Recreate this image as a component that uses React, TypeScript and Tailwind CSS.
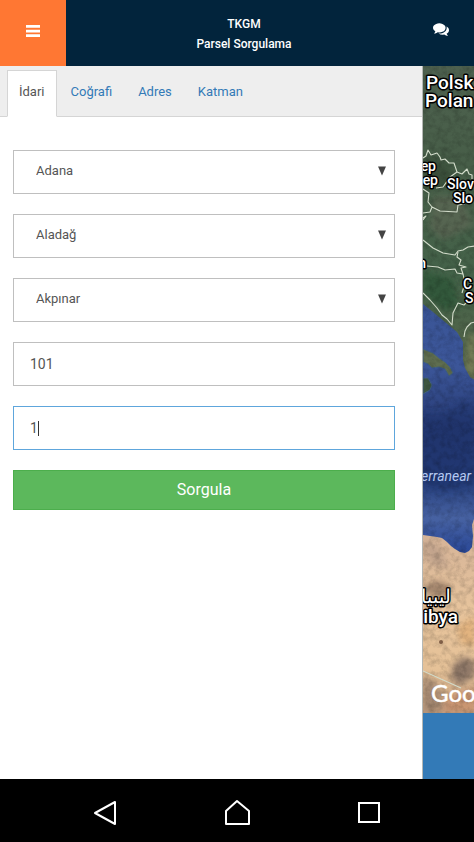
import { useState } from "react";

const TABS = ["İdari", "Coğrafi", "Adres", "Katman"];

const FIELD =
  "block h-11 w-full appearance-none rounded-none border bg-white text-[#555555] outline-none";

interface SelectFieldProps {
  label: string;
  options: string[];
}

function SelectField({ label, options }: SelectFieldProps) {
  return (
    <div className="relative">
      <select
        aria-label={label}
        className={`${FIELD} border-[#bfbfbf] pr-8 pb-0.5 pl-[22px] text-[13px]`}
      >
        {options.map((option) => (
          <option key={option}>{option}</option>
        ))}
      </select>
      <svg
        viewBox="0 0 10 10"
        className="pointer-events-none absolute top-4 right-2 size-[10px] fill-[#444444]"
        aria-hidden="true"
      >
        <path d="M1 0.5h8L5 9.5z" />
      </svg>
    </div>
  );
}

function Header() {
  return (
    <header className="flex h-[66px] shrink-0 items-stretch bg-[#02243c] text-white">
      <button
        type="button"
        aria-label="Menü"
        className="flex w-[66px] items-center justify-center bg-[#ff7733] pb-1"
      >
        <svg viewBox="0 0 14 12" className="h-3 w-[14px] fill-white" aria-hidden="true">
          <path d="M0 0h14v2.700H0zM0 4.700h14v2.700H0zM0 9.300h14v2.700H0z" />
        </svg>
      </button>
      <h1 className="flex-1 pt-[14px] text-center text-xs leading-5 font-medium">
        TKGM
        <br />
        Parsel Sorgulama
      </h1>
      <button
        type="button"
        aria-label="Mesajlar"
        className="flex w-[52px] items-center justify-center pr-[14px] pb-2"
      >
        <svg viewBox="0 0 1792 1792" className="size-4 fill-white" aria-hidden="true">
          <path d="M1408 768q0 139-94 257t-256.500 186.500-353.500 68.500q-86 0-176-16-124 88-278 128-36 9-86 16h-3q-11 0-20.500-8t-11.500-21q-1-3-1-6.500t.5-6.500 2-6l2.500-5t3.500-5.500 4-5 4.500-5 4-4.500q5-6 23-25t26-29.500 22.500-29 25-38.500 20.500-44q-124-72-195-177t-71-224q0-139 94-257t256.500-186.500 353.500-68.500 353.500 68.500 256.500 186.500 94 257zm384 256q0 120-71 224.500t-195 176.500q10 24 20.500 44t25 38.500 22.500 29 26 29.500 23 25q1 1 4 4.500t4.500 5 4 5 3.500 5.500l2.500 5t2 6 .5 6.500-1 6.500q-3 14-13 22t-22 7q-50-7-86-16-154-40-278-128-90 16-176 16-271 0-472-132 58 4 88 4 161 0 309-45t264-129q125-92 192-212t67-254q0-77-23-152 129 71 204 178t75 230z" />
        </svg>
      </button>
    </header>
  );
}

function MapStrip() {
  return (
    <svg
      viewBox="0 0 52 647"
      preserveAspectRatio="xMinYMin slice"
      className="min-h-0 w-full flex-1"
      role="img"
      aria-label="Harita"
    >
      <defs>
        <linearGradient id="land" x1="0" y1="0" x2="0" y2="320" gradientUnits="userSpaceOnUse">
          <stop offset="0" stopColor="#4e614f" />
          <stop offset="0.3" stopColor="#475e48" />
          <stop offset="0.65" stopColor="#446249" />
          <stop offset="1" stopColor="#59674b" />
        </linearGradient>
        <linearGradient id="sea" x1="0" y1="238" x2="0" y2="487" gradientUnits="userSpaceOnUse">
          <stop offset="0" stopColor="#3a5596" />
          <stop offset="0.25" stopColor="#3c5699" />
          <stop offset="0.5" stopColor="#263a74" />
          <stop offset="0.72" stopColor="#28417f" />
          <stop offset="0.86" stopColor="#4762a2" />
          <stop offset="1" stopColor="#2a4898" />
        </linearGradient>
        <linearGradient id="sand" x1="0" y1="468" x2="0" y2="647" gradientUnits="userSpaceOnUse">
          <stop offset="0" stopColor="#d6b498" />
          <stop offset="0.4" stopColor="#e6c39c" />
          <stop offset="0.75" stopColor="#e6c298" />
          <stop offset="1" stopColor="#c39f80" />
        </linearGradient>
        <filter id="grain" x="0" y="0" width="100%" height="100%">
          <feTurbulence type="fractalNoise" baseFrequency="0.16" numOctaves="4" seed="7" />
          <feColorMatrix values="0 0 0 0 0  0 0 0 0 0  0 0 0 0 0  1.6 0 0 0 -0.62" />
        </filter>
        <filter id="soft" x="-50%" y="-50%" width="200%" height="200%">
          <feGaussianBlur stdDeviation="3" />
        </filter>
      </defs>

      <rect width="52" height="330" fill="url(#land)" />
      <g filter="url(#soft)">
        <path d="M0 88l20 6 10 10-8 16-22 4z" fill="#3a503a" />
        <path d="M10 130l30 0 10 30-30 14-14-12z" fill="#566551" />
        <path d="M0 205l30 8 6 28-14 4-22-18z" fill="#33593b" />
        <path d="M46 270l6-4v46l-8-8z" fill="#7b8158" />
      </g>

      <path
        d="M0 238L10 246 22 256 34 266 40 276 40 294 42 302 47 311 52 314V540H0z"
        fill="url(#sea)"
      />
      <path d="M0 345q18 6 30-4t22-2v78q-24 14-52 4z" fill="#192c61" opacity="0.35" filter="url(#soft)" />
      <g stroke="#3f5f84" strokeWidth="1">
        <path d="M0 283L10 287 16 292 22 296 27 301 30 307 26 310 22 303 16 301 9 302 5 298 0 296z" fill="#5f6e50" />
        <path d="M0 312L5 312 9 319 7 324 0 328z" fill="#3e5741" />
      </g>
      <path d="M8 411l8 3 9-8" fill="none" stroke="#172956" strokeWidth="2" opacity="0.4" />

      <path
        d="M0 469L14 471 19 472 24 476 28 480 32 483 37 486 42 487 46 485 49 481 50 470 49 459 52 450V647H0z"
        fill="url(#sand)"
      />
      <g filter="url(#soft)">
        <path d="M0 474l16 6 10 22-20-4z" fill="#a98f7f" opacity="0.5" />
        <ellipse cx="14" cy="523" rx="13" ry="8" fill="#795f50" opacity="0.6" />
        <path d="M30 598l12-8 10 6v14l-16 10-8-8z" fill="#8f7868" />
        <path d="M0 610l14 8 8 24-22 5z" fill="#9a806b" opacity="0.8" />
        <path d="M34 560l18-10v30l-14-2z" fill="#e0a86c" opacity="0.6" />
        <path d="M24 630l28-8v25H20z" fill="#c99572" />
      </g>
      <circle cx="18" cy="576" r="2" fill="#86634a" />
      <rect width="52" height="647" filter="url(#grain)" opacity="0.22" />

      <g fill="none" stroke="#d3dccb" strokeWidth="1.1" strokeLinejoin="round">
        <path d="M0 92L3 90 5 84 8 89 14 87 17 91 18 94 22 93 26 97 31 97 34 106" />
        <path d="M13 122L20 121 27 111 34 106 39 108 44 103 46 108 49 109 49 113" />
        <path d="M0 123L6 127 5 136 9 141 7 146 0 147M9 141L17 145 34 146 35 139 42 138" />
        <path d="M0 152L3 150 0 154M0 174L10 182 20 187 32 189 35 185 40 184 45 181 52 180" />
        <path d="M35 186L34 191 38 194 36 199 43 201 38 202 40 208 34 207 32 203 22 204 15 201 4 200" />
        <path d="M40 208L42 217 39 227M0 227L7 234 14 242 19 249 24 253 29 259 30 247 35 237 41 239 45 235 52 236" />
        <path d="M41 271L42 265 44 261 48 257 52 256" />
        <path d="M0 605L38 622" />
      </g>

      <g
        className="font-['Roboto','Noto_Sans',sans-serif] font-medium"
        fill="#ffffff"
        stroke="#000000"
        strokeWidth="3"
        strokeLinejoin="round"
        paintOrder="stroke"
      >
        <text x="3" y="23" fontSize="19">Polsk</text>
        <text x="2" y="41" fontSize="19">Polan</text>
        <text x="13" y="105" fontSize="14" textAnchor="end">ep</text>
        <text x="15" y="119" fontSize="14" textAnchor="end">ep</text>
        <text x="24" y="123" fontSize="14">Slov</text>
        <text x="30" y="137" fontSize="14">Slo</text>
        <text x="3" y="202" fontSize="14" textAnchor="end">n</text>
        <text x="40" y="223" fontSize="14">C</text>
        <text x="42" y="237" fontSize="14">S</text>
        <text x="28" y="537" fontSize="19" textAnchor="end">ليبيا</text>
        <text x="35" y="557" fontSize="19" textAnchor="end">ibya</text>
      </g>
      <text
        x="-2"
        y="415"
        className="font-['Roboto',sans-serif] italic"
        fontSize="14"
        fill="#b4c9f1"
      >
        erranear
      </text>
      <text
        x="8"
        y="636"
        className="font-['Lato',sans-serif]"
        fontSize="24"
        fill="#ffffff"
        stroke="#ffffff"
        strokeWidth="0.5"
      >
        Goo
      </text>
    </svg>
  );
}

function NavBar() {
  return (
    <nav className="flex h-[63px] shrink-0 items-center justify-center gap-[103px] bg-black pt-1">
      <button type="button" aria-label="Geri">
        <svg viewBox="0 0 28 28" className="size-7 fill-none stroke-white stroke-2">
          <path d="M23 3v22L3 14z" strokeLinejoin="round" />
        </svg>
      </button>
      <button type="button" aria-label="Ana ekran">
        <svg viewBox="0 0 28 28" className="size-7 fill-none stroke-white stroke-2">
          <path d="M14 2L26 12V25H3V12z" strokeLinejoin="round" />
        </svg>
      </button>
      <button type="button" aria-label="Son uygulamalar">
        <svg viewBox="0 0 28 28" className="size-7 fill-none stroke-white stroke-2">
          <path d="M5 4h20v19H5z" />
        </svg>
      </button>
    </nav>
  );
}

export default function App() {
  const [active, setActive] = useState(TABS[0]);
  const [parcel, setParcel] = useState("1");

  return (
    <div className="flex min-h-screen flex-col bg-white font-['Roboto',sans-serif]">
      <Header />
      <main className="flex flex-1">
        <section className="min-w-0 flex-1">
          <div
            role="tablist"
            className="flex items-end gap-0.5 border-b border-[#d5d5d5] bg-[#eeeeee] pt-1 pl-[7px]"
          >
            {TABS.map((tab) => (
              <button
                key={tab}
                type="button"
                role="tab"
                aria-selected={tab === active}
                onClick={() => setActive(tab)}
                className={[
                  "-mb-px h-[47px] border px-[11px] pb-1 text-[13px]",
                  tab === active
                    ? "border-[#d5d5d5] border-b-white bg-white text-[#555555]"
                    : "border-transparent text-[#337ab7]",
                ].join(" ")}
              >
                {tab}
              </button>
            ))}
          </div>

          <form
            className="flex flex-col gap-5 pt-[33px] pr-[27px] pl-[13px]"
            onSubmit={(e) => e.preventDefault()}
          >
            <SelectField label="İl" options={["Adana"]} />
            <SelectField label="İlçe" options={["Aladağ"]} />
            <SelectField label="Mahalle" options={["Akpınar"]} />
            <input
              aria-label="Ada"
              defaultValue="101"
              className={`${FIELD} border-[#bfbfbf] px-4 text-sm`}
            />
            <div className="relative">
              <input
                aria-label="Parsel"
                value={parcel}
                onChange={(e) => setParcel(e.target.value)}
                className={`${FIELD} border-[#5ea6dc] px-4 text-sm caret-transparent`}
              />
              {/* text cursor after the last digit */}
              <span className="pointer-events-none absolute top-[15px] left-[25px] h-[15px] w-px bg-[#333333]" />
            </div>
            <button
              type="submit"
              className="h-10 border border-[#4cae4c] bg-[#5cb85c] text-base text-white"
            >
              Sorgula
            </button>
          </form>
        </section>

        <aside className="flex w-[52px] shrink-0 flex-col overflow-hidden border-l border-[#b5b8b5]">
          <MapStrip />
          <div className="h-[66px] shrink-0 bg-[#337ab7]" />
        </aside>
      </main>
      <NavBar />
    </div>
  );
}
